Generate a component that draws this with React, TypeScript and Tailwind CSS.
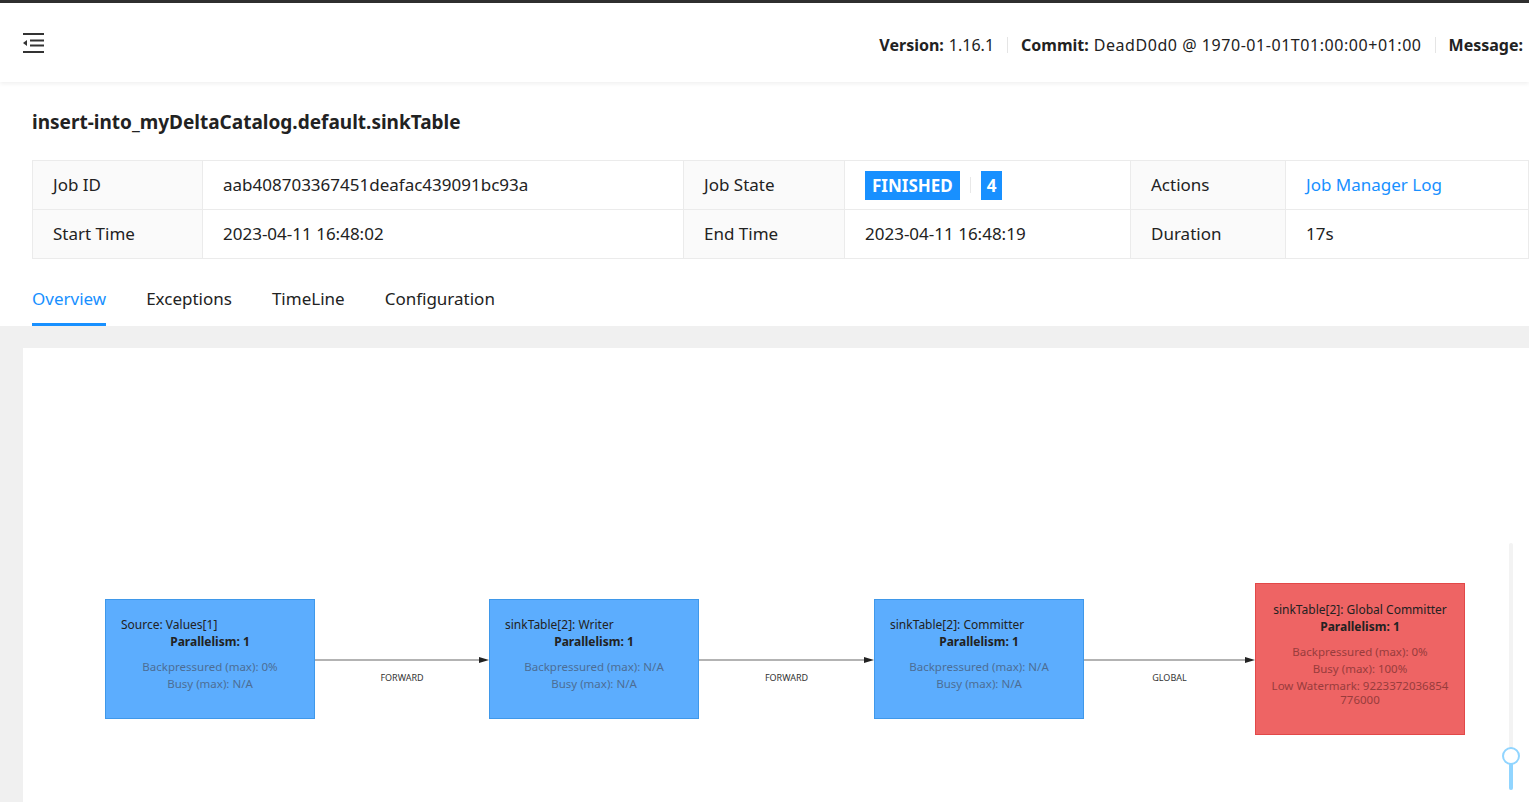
import React from "react";

const font = { fontFamily: '"Noto Sans", "Open Sans", sans-serif' };

function MenuFold() {
  return (
    <svg width="22" height="20" viewBox="0 0 22 20" className="block">
      <rect x="0" y="0" width="21" height="2" fill="#333" />
      <rect x="7" y="6.5" width="14" height="2" fill="#333" />
      <rect x="7" y="11.5" width="14" height="2" fill="#333" />
      <rect x="0" y="18" width="21" height="2" fill="#333" />
      <path d="M0 10 L4 7 L4 13 Z" fill="#333" />
    </svg>
  );
}

type NodeProps = {
  left: number;
  top: number;
  height: number;
  red?: boolean;
  title: string;
  titleCentered?: boolean;
  metrics: string[];
};

function DagNode({ left, top, height, red, title, titleCentered, metrics }: NodeProps) {
  return (
    <div
      className={
        "absolute flex w-[210px] flex-col justify-center border pb-[8px] text-[12px] " +
        (red ? "border-[#e24848] bg-[#ee6464]" : "border-[#3f98ea] bg-[#5cadfe]")
      }
      style={{ left, top, height }}
    >
      <div className={"leading-[17px] text-[#222] " + (titleCentered ? "text-center" : "pl-[15px]")}>{title}</div>
      <div className="text-center font-bold leading-[17px] text-[#222]">Parallelism: 1</div>
      <div className={"mt-[10px] px-[2px] text-center text-[11.5px] " + (red ? "text-[#983c3c]" : "text-[#4c6d95]")}>
        {metrics.map((m, i) => (
          <div key={i} className="mb-[3px] leading-[14px]">{m}</div>
        ))}
      </div>
    </div>
  );
}

function Edge({ x1, x2, y, label }: { x1: number; x2: number; y: number; label: string }) {
  return (
    <>
      <svg className="absolute" style={{ left: x1, top: y - 6 }} width={x2 - x1} height={12}>
        <line x1={0} y1={6} x2={x2 - x1 - 8} y2={6} stroke="#b3b3b3" strokeWidth={2} />
        <path d={`M${x2 - x1 - 10} 3 L${x2 - x1} 6 L${x2 - x1 - 10} 9 Z`} fill="#222" />
      </svg>
      <div
        className="absolute text-center text-[9px] text-[#333]"
        style={{ left: x1, width: x2 - x1, top: y + 11 }}
      >
        {label}
      </div>
    </>
  );
}

export default function App() {
  return (
    <div className="h-[802px] w-[1529px] overflow-hidden bg-white text-[#222]" style={font}>
      <div className="h-[3px] bg-[#2f2f2f]" />
      <header className="relative z-10 flex h-[79px] items-center bg-white shadow-[0_2px_4px_rgba(0,0,0,0.06)]">
        <div className="ml-[23px]">
          <MenuFold />
        </div>
        <div className="ml-auto flex items-center whitespace-nowrap pt-[4px] pr-[6px] text-[16px] text-[#222]">
          <span className="font-bold">Version:</span>
          <span className="ml-[5px]">1.16.1</span>
          <span className="mx-[13px] h-[16px] w-px bg-[#e5e5e5]" />
          <span className="font-bold">Commit:</span>
          <span className="ml-[5px] tracking-[0.55px]">DeadD0d0 @ 1970-01-01T01:00:00+01:00</span>
          <span className="mx-[13px] h-[16px] w-px bg-[#e5e5e5]" />
          <span className="font-bold">Message:</span>
        </div>
      </header>

      <div className="px-[32px] pt-[26px]">
        <h1 className="text-[19px] font-bold leading-[28px] text-[#222]">insert-into_myDeltaCatalog.default.sinkTable</h1>
        <div className="mt-[24px] mr-[-32px] border border-[#ebebeb] text-[17px]">
          <div className="flex h-[49px] border-b border-[#ebebeb]">
            <div className="flex w-[170px] items-center border-r border-[#ebebeb] bg-[#fafafa] pl-[20px]">Job ID</div>
            <div className="flex w-[481px] items-center border-r border-[#ebebeb] pl-[20px]">aab408703367451deafac439091bc93a</div>
            <div className="flex w-[161px] items-center border-r border-[#ebebeb] bg-[#fafafa] pl-[20px]">Job State</div>
            <div className="flex w-[286px] items-center border-r border-[#ebebeb] pl-[20px]">
              <span className="bg-[#1890ff] px-[7px] py-[2px] font-bold leading-[25px] text-white">FINISHED</span>
              <span className="mx-[10px] h-[16px] w-px bg-[#e8e8e8]" />
              <span className="bg-[#1890ff] px-[6px] py-[2px] font-bold leading-[25px] text-white">4</span>
            </div>
            <div className="flex w-[155px] items-center border-r border-[#ebebeb] bg-[#fafafa] pl-[20px]">Actions</div>
            <div className="flex flex-1 items-center pl-[20px] text-[#1890ff]">Job Manager Log</div>
          </div>
          <div className="flex h-[48px]">
            <div className="flex w-[170px] items-center border-r border-[#ebebeb] bg-[#fafafa] pl-[20px]">Start Time</div>
            <div className="flex w-[481px] items-center border-r border-[#ebebeb] pl-[20px]">2023-04-11 16:48:02</div>
            <div className="flex w-[161px] items-center border-r border-[#ebebeb] bg-[#fafafa] pl-[20px]">End Time</div>
            <div className="flex w-[286px] items-center border-r border-[#ebebeb] pl-[20px]">2023-04-11 16:48:19</div>
            <div className="flex w-[155px] items-center border-r border-[#ebebeb] bg-[#fafafa] pl-[20px]">Duration</div>
            <div className="flex flex-1 items-center pl-[20px]">17s</div>
          </div>
        </div>

        <div className="mt-[21px] flex gap-[40px] text-[17px]">
          {["Overview", "Exceptions", "TimeLine", "Configuration"].map((t, i) => (
            <div
              key={t}
              className={
                "h-[46px] pt-[6px] " +
                (i === 0 ? "border-b-[3px] border-[#1890ff] text-[#1890ff]" : "text-[#222]")
              }
            >
              {t}
            </div>
          ))}
        </div>
      </div>

      <div className="h-full bg-[#f0f0f0] pl-[23px] pt-[22px]">
        <div className="relative h-[460px] bg-white">
          <DagNode left={82} top={251} height={120} title="Source: Values[1]" metrics={["Backpressured (max): 0%", "Busy (max): N/A"]} />
          <Edge x1={292} x2={466} y={312} label="FORWARD" />
          <DagNode left={466} top={251} height={120} title="sinkTable[2]: Writer" metrics={["Backpressured (max): N/A", "Busy (max): N/A"]} />
          <Edge x1={676} x2={851} y={312} label="FORWARD" />
          <DagNode left={851} top={251} height={120} title="sinkTable[2]: Committer" metrics={["Backpressured (max): N/A", "Busy (max): N/A"]} />
          <Edge x1={1061} x2={1232} y={312} label="GLOBAL" />
          <DagNode
            left={1232}
            top={235}
            height={152}
            red
            titleCentered
            title="sinkTable[2]: Global Committer"
            metrics={["Backpressured (max): 0%", "Busy (max): 100%", "Low Watermark: 9223372036854 776000"]}
          />
          <div className="absolute left-[1486px] top-[195px] h-[247px] w-[4px] rounded-full bg-[#f3f3f3]" />
          <div className="absolute left-[1486px] top-[407px] h-[35px] w-[4px] rounded-full bg-[#91d5ff]" />
          <div className="absolute left-[1479px] top-[399px] h-[18px] w-[18px] rounded-full border-2 border-[#91d5ff] bg-white" />
        </div>
      </div>
    </div>
  );
}
